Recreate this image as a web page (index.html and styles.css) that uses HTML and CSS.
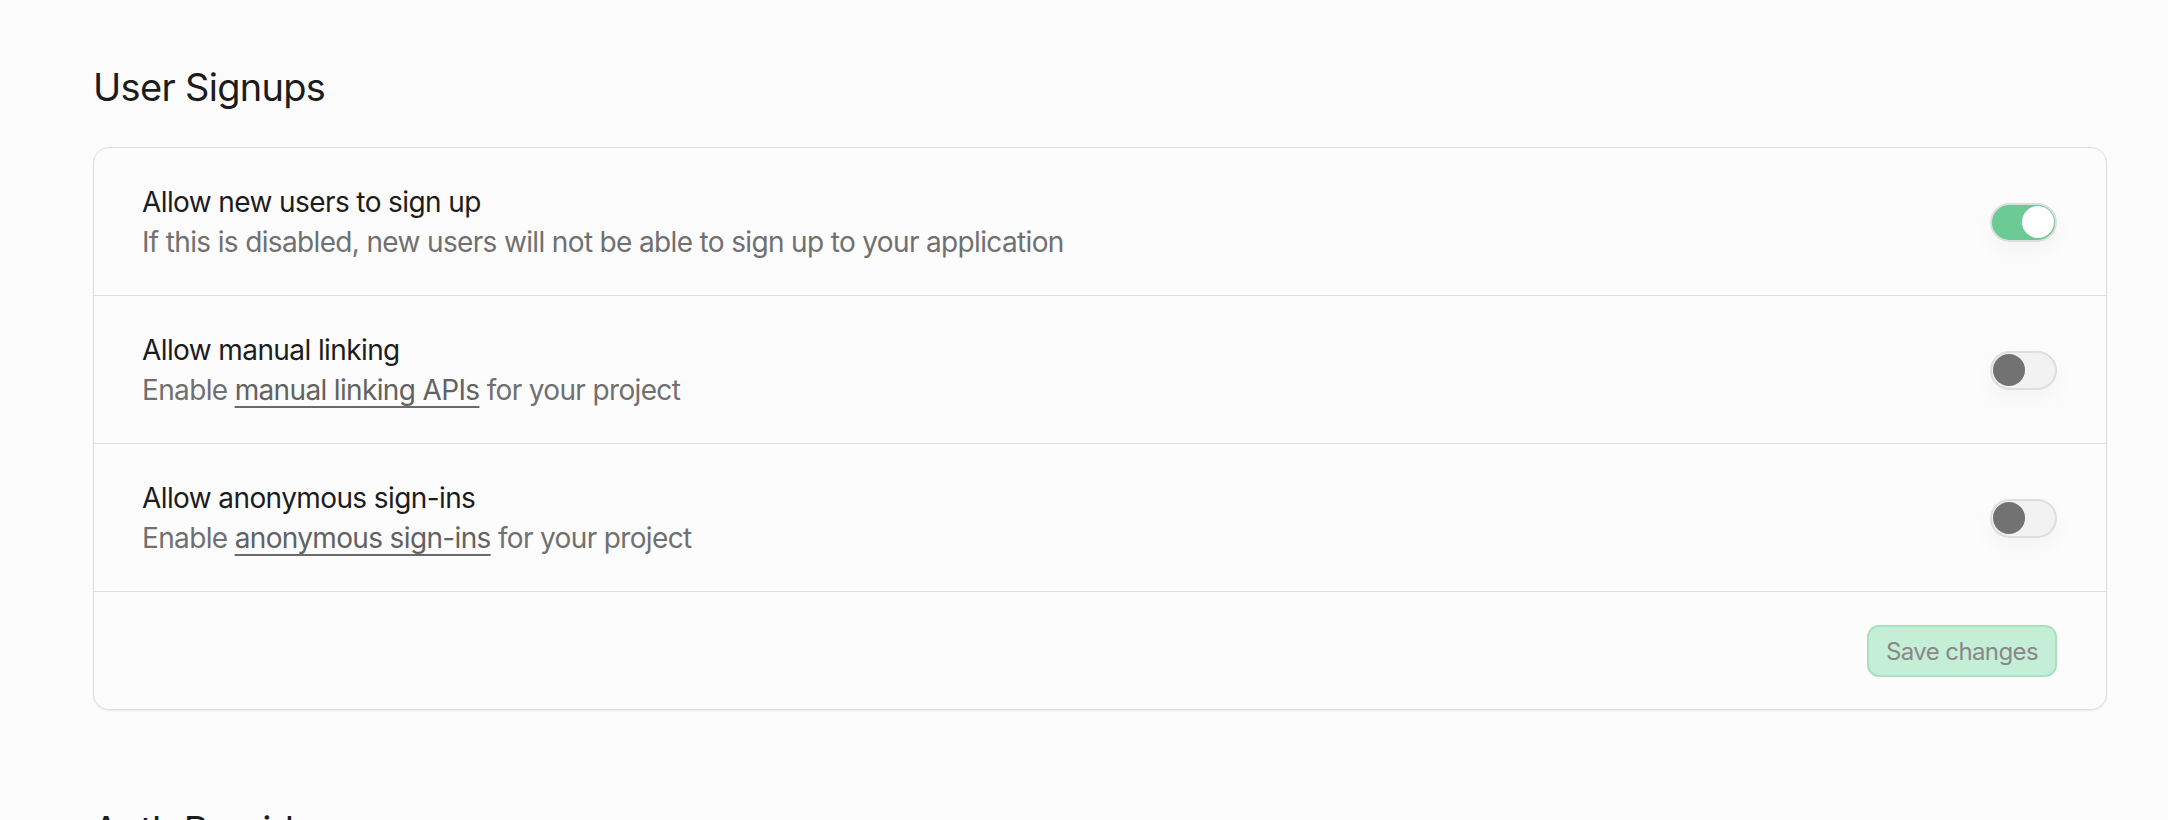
FILE: index.html
```html
<!DOCTYPE html>
<html lang="en">
<head>
<meta charset="utf-8">
<title>User Signups</title>
<link rel="stylesheet" href="styles.css">
</head>
<body>
<main class="page">
  <section class="section">
    <h2 class="section-title">User Signups</h2>
    <div class="card">
      <div class="row">
        <div class="row-text">
          <div class="row-title">Allow new users to sign up</div>
          <div class="row-desc">If this is disabled, new users will not be able to sign up to your application</div>
        </div>
        <span class="toggle toggle-on"><span class="knob"></span></span>
      </div>
      <div class="row">
        <div class="row-text">
          <div class="row-title">Allow manual linking</div>
          <div class="row-desc">Enable <a class="link" href="#">manual linking APIs</a> for your project</div>
        </div>
        <span class="toggle toggle-off"><span class="knob"></span></span>
      </div>
      <div class="row">
        <div class="row-text">
          <div class="row-title">Allow anonymous sign-ins</div>
          <div class="row-desc">Enable <a class="link" href="#">anonymous sign-ins</a> for your project</div>
        </div>
        <span class="toggle toggle-off"><span class="knob"></span></span>
      </div>
      <div class="card-footer">
        <button class="btn-save" disabled>Save changes</button>
      </div>
    </div>
  </section>
  <section class="section section-next">
    <h2 class="section-title">Auth Providers</h2>
  </section>
</main>
</body>
</html>
```
FILE: styles.css
```css
html, body {
  margin: 0;
  padding: 0;
  background: #fcfcfc;
  font-family: Inter, "Liberation Sans", Arial, sans-serif;
  color: #1c1c1c;
  overflow: hidden;
}

.page {
  width: 2014px;
  margin-left: 93px;
  padding-top: 59px;
}

.section-title {
  margin: 0 0 32px 0;
  font-size: 38px;
  line-height: 56px;
  font-weight: 400;
  letter-spacing: -0.7px;
  color: #1c1c1c;
}

.section-next {
  margin-top: 92px;
}

.card {
  border: 1px solid #dfdfdf;
  border-radius: 16px;
  background: #fcfcfc;
  box-shadow: 0 1px 2px rgba(0, 0, 0, 0.07);
}

.row {
  display: flex;
  align-items: center;
  justify-content: space-between;
  padding: 34px 49px 33px 48px;
  border-bottom: 1px solid #dfdfdf;
}

.row-text {
  display: flex;
  flex-direction: column;
}

.row-title {
  font-size: 28px;
  line-height: 40px;
  letter-spacing: -0.6px;
  color: #1c1c1c;
}

.row-desc {
  font-size: 28px;
  line-height: 40px;
  letter-spacing: -0.65px;
  color: #707070;
}

.link {
  color: #626262;
  text-decoration: underline;
  text-decoration-thickness: 2px;
  text-underline-offset: 6px;
  text-decoration-color: #6a6a6a;
}

.toggle {
  box-sizing: border-box;
  width: 67px;
  height: 39px;
  border-radius: 20px;
  border: 2px solid #dedede;
  display: flex;
  align-items: center;
  padding: 0 1px;
  box-shadow: 0 10px 22px rgba(0, 0, 0, 0.035);
}

.knob {
  width: 32px;
  height: 32px;
  border-radius: 50%;
}

.toggle-on {
  background: #6ccb94;
  justify-content: flex-end;
}

.toggle-on .knob {
  background: #ffffff;
}

.toggle-off {
  background: #f2f2f2;
  justify-content: flex-start;
}

.toggle-off .knob {
  background: #727272;
}

.card-footer {
  display: flex;
  justify-content: flex-end;
  padding: 33px 49px 32px 48px;
}

.btn-save {
  box-sizing: border-box;
  width: 190px;
  height: 52px;
  border: 2px solid #a8e0c0;
  border-radius: 12px;
  background: #c5eed7;
  color: #888888;
  font-family: Inter, "Liberation Sans", Arial, sans-serif;
  font-size: 24px;
  letter-spacing: -0.6px;
  padding: 0;
  cursor: default;
}
```
